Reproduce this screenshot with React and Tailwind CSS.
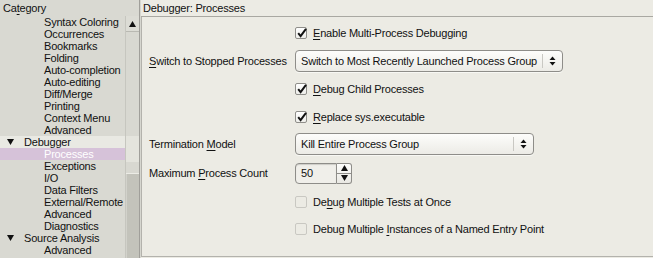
import React from "react";

const U = ({ children }) => (
  <span className="underline decoration-[1px] underline-offset-[2px]">{children}</span>
);

function Tri({ dir = "down", className = "" }) {
  return (
    <svg width="7" height="6" viewBox="0 0 7 6" className={className}>
      {dir === "down" ? (
        <polygon points="0,0 7,0 3.5,6" fill="#111" />
      ) : (
        <polygon points="0,6 7,6 3.5,0" fill="#111" />
      )}
    </svg>
  );
}

function UpDown() {
  return (
    <svg width="7" height="10" viewBox="0 0 7 10">
      <polygon points="0.5,4 6.5,4 3.5,0.5" fill="#111" />
      <polygon points="0.5,6 6.5,6 3.5,9.5" fill="#111" />
    </svg>
  );
}

function Check({ checked, disabled, children }) {
  return (
    <div className="flex items-center">
      <div
        className={
          "relative w-[12px] h-[12px] rounded-[2px] border " +
          (disabled
            ? "border-[#c9c8c2] bg-[#ecebe4]"
            : "border-[#8f8e8a] bg-gradient-to-b from-[#ffffff] to-[#eeeeea]")
        }
      >
        {checked && (
          <svg
            width="12"
            height="12"
            viewBox="0 0 12 12"
            className="absolute left-[0px] top-[-1px]"
          >
            <path
              d="M2.2 6.2 L4.6 9.2 L10 1.8"
              stroke="#111"
              strokeWidth="2"
              fill="none"
              strokeLinejoin="miter"
            />
          </svg>
        )}
      </div>
      <span className="ml-[6px]">{children}</span>
    </div>
  );
}

function Select({ width, sepAt, children }) {
  return (
    <div
      className="flex items-center h-[22px] rounded-[4px] border border-[#8e8d89] bg-gradient-to-b from-[#fdfdfb] to-[#ecebe6] shadow-[0_1px_0_#f8f8f4]"
      style={{ width }}
    >
      <div className="pl-[5px] flex-1 whitespace-nowrap overflow-hidden">{children}</div>
      <div className="w-[1px] h-[14px] bg-[#c9c8c3]" />
      <div className="w-[19px] flex items-center justify-center">
        <UpDown />
      </div>
    </div>
  );
}

function Spinner() {
  return (
    <div className="flex h-[21px]">
      <div className="w-[42px] h-full rounded-l-[4px] border border-[#8e8d89] bg-[#f0efea] pl-[5px] flex items-center shadow-[inset_0_1px_1px_rgba(0,0,0,0.15)]">
        50
      </div>
      <div className="w-[15px] h-full flex flex-col rounded-r-[3px] border border-l-0 border-[#8e8d89] bg-gradient-to-b from-[#fdfdfb] to-[#e9e8e3]">
        <div className="flex-1 flex items-center justify-center border-b border-[#8e8d89]">
          <Tri dir="up" />
        </div>
        <div className="flex-1 flex items-center justify-center">
          <Tri dir="down" />
        </div>
      </div>
    </div>
  );
}

const tree = [
  { t: "Syntax Coloring", l: 2 },
  { t: "Occurrences", l: 2 },
  { t: "Bookmarks", l: 2 },
  { t: "Folding", l: 2 },
  { t: "Auto-completion", l: 2 },
  { t: "Auto-editing", l: 2 },
  { t: "Diff/Merge", l: 2 },
  { t: "Printing", l: 2 },
  { t: "Context Menu", l: 2 },
  { t: "Advanced", l: 2 },
  { t: "Debugger", l: 1, open: true, hl: true },
  { t: "Processes", l: 2, sel: true },
  { t: "Exceptions", l: 2 },
  { t: "I/O", l: 2 },
  { t: "Data Filters", l: 2 },
  { t: "External/Remote", l: 2 },
  { t: "Advanced", l: 2 },
  { t: "Diagnostics", l: 2 },
  { t: "Source Analysis", l: 1, open: true },
  { t: "Advanced", l: 2 },
];

function Row({ h, label, children }) {
  return (
    <div className="flex items-center" style={{ height: h }}>
      <div className="w-[146px] shrink-0 whitespace-nowrap">{label}</div>
      <div className="flex-1">{children}</div>
    </div>
  );
}

export default function App() {
  return (
    <div className="w-[653px] h-[258px] flex overflow-hidden bg-[#d9d9d2] text-[#111] font-['Liberation_Sans',Arial,sans-serif] text-[11px] tracking-[-0.2px] leading-[12px]">
      {/* Left column */}
      <div className="w-[140px] shrink-0 flex flex-col border-r border-[#a09f9a]">
        <div className="h-[16px] shrink-0 pl-[3px] flex items-center">
          Ca<U>t</U>egory
        </div>
        <div className="flex-1 flex min-h-0">
          <div className="w-[125px] shrink-0 overflow-hidden">
            {tree.map((r, i) => (
              <div
                key={i}
                className={
                  "h-[12px] flex items-center whitespace-nowrap " +
                  (r.sel ? "bg-[#d6c2d9] text-white " : "") +
                  (r.hl ? "bg-[#e9e9e3] " : "")
                }
              >
                {r.l === 1 ? (
                  <>
                    <div className="w-[24px] pl-[7px] flex items-center">
                      <Tri dir="down" />
                    </div>
                    <span>{r.t}</span>
                  </>
                ) : (
                  <span className="pl-[44px]">{r.t}</span>
                )}
              </div>
            ))}
          </div>
          {/* scrollbar */}
          <div className="w-[14px] shrink-0 flex flex-col border-l border-[#c6c6bf] relative">
            <div className="h-[16px] shrink-0 flex items-center justify-center border-b border-[#b9b9b2] bg-[#dcdcd5]">
              <Tri dir="up" />
            </div>
            <div className="h-[142px] shrink-0 bg-[#d8d8d1] border-b border-[#ecece6]" />
            <div className="flex-1 bg-[#c3c3bb] border-l border-[#d2d2cb]" />
            <div className="absolute left-0 right-0 top-[120px] h-[26px] bg-[#e7e7e0] opacity-80" />
          </div>
        </div>
      </div>
      <div className="w-[1px] shrink-0 bg-[#d6d6cf]" />
      {/* Right column */}
      <div className="flex-1 flex flex-col bg-[#ecebe4]">
        <div className="h-[17px] shrink-0 pl-[2px] flex items-center border-b border-[#a9a8a2]">
          Debugger: Processes
        </div>
        <div className="h-[240px] shrink-0 border-l border-b border-[#b3b2ac] pl-[7px] pt-[2px] flex flex-col">
          <Row h={28} label="">
            <Check checked>
              <U>E</U>nable Multi-Process Debugging
            </Check>
          </Row>
          <Row
            h={28}
            label={
              <span>
                <U>S</U>witch to Stopped Processes
              </span>
            }
          >
            <Select width={268}>Switch to Most Recently Launched Process Group</Select>
          </Row>
          <Row h={28} label="">
            <Check checked>
              <U>D</U>ebug Child Processes
            </Check>
          </Row>
          <Row h={27} label="">
            <Check checked>
              <U>R</U>eplace sys.executable
            </Check>
          </Row>
          <Row
            h={28}
            label={
              <span>
                Termination <U>M</U>odel
              </span>
            }
          >
            <Select width={239}>Kill Entire Process Group</Select>
          </Row>
          <Row
            h={30}
            label={
              <span>
                Maximum <U>P</U>rocess Count
              </span>
            }
          >
            <Spinner />
          </Row>
          <Row h={27} label="">
            <Check disabled>
              De<U>b</U>ug Multiple Tests at Once
            </Check>
          </Row>
          <Row h={27} label="">
            <Check disabled>
              Debug Multiple <U>I</U>nstances of a Named Entry Point
            </Check>
          </Row>
        </div>
      </div>
    </div>
  );
}
